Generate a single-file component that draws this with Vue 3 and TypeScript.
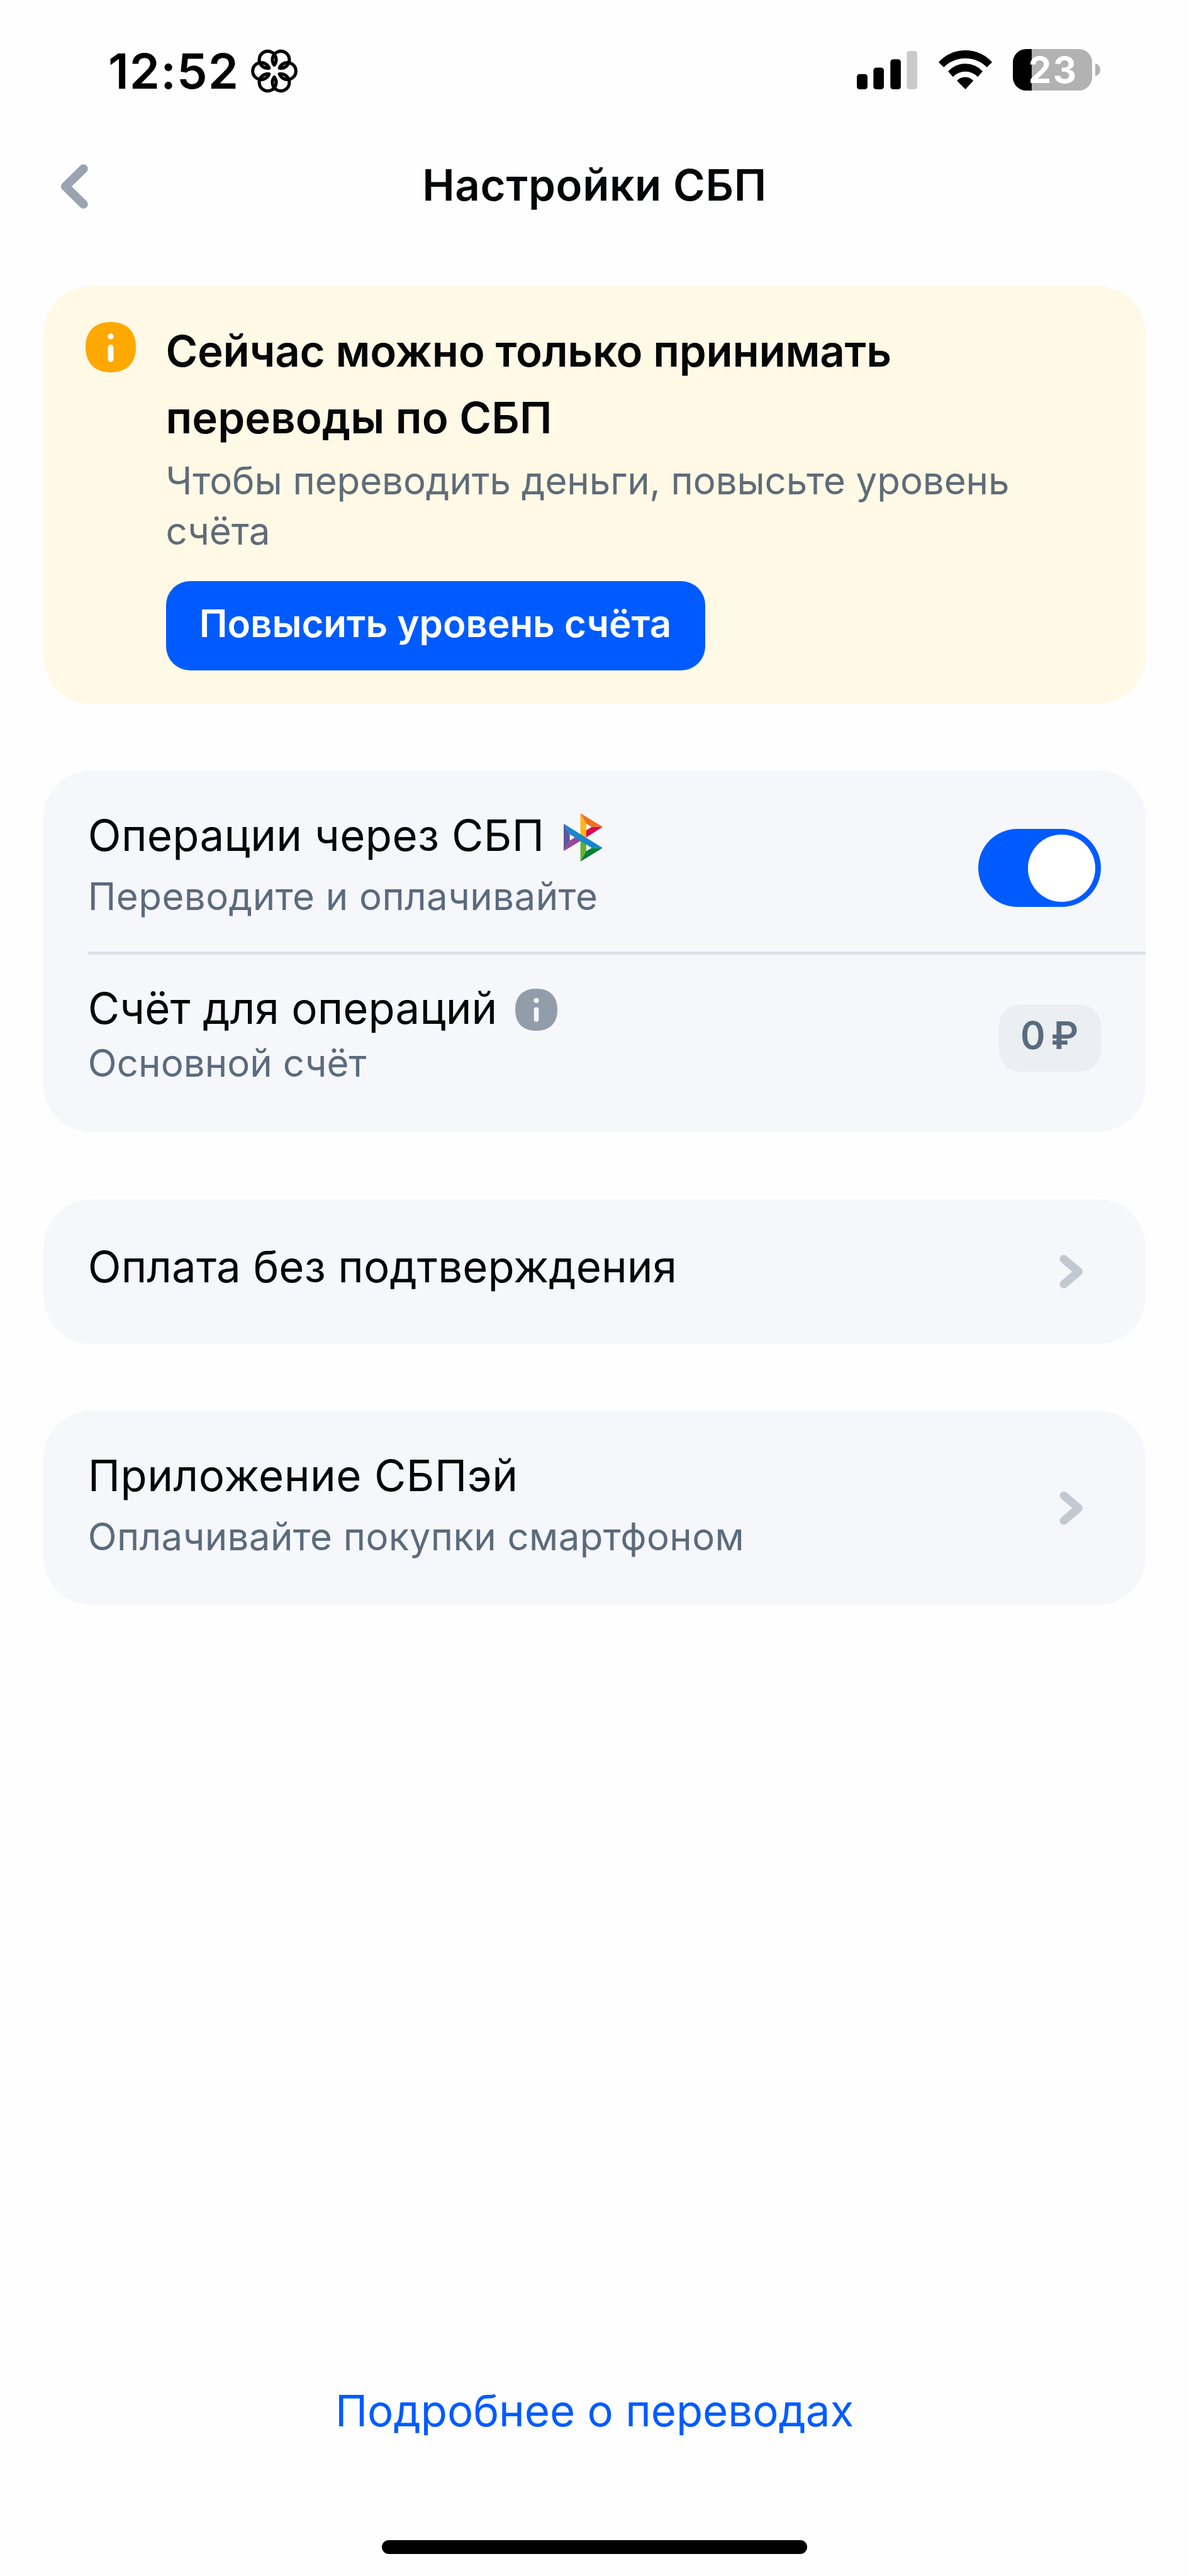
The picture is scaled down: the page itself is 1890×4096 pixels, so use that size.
<script setup lang="ts">
import { ref } from 'vue'

interface LinkCard {
  title: string
  subtitle?: string
  spacing: string
}

const operationsOn = ref(true)

const linkCards: LinkCard[] = [
  { title: 'Оплата без подтверждения', spacing: 'plain' },
  { title: 'Приложение СБПэй', subtitle: 'Оплачивайте покупки смартфоном', spacing: 'wide' },
]

const petalAngles = [0, 60, 120, 180, 240, 300]
</script>

<template>
  <div class="screen">
    <header class="status">
      <div class="status-left">
        <span class="time">12:52</span>
        <svg class="flower" viewBox="-137.5 -137.5 275 275">
          <path
            v-for="angle in petalAngles"
            :key="angle"
            d="M31 18A50 50 0 1 0 31 -18"
            :transform="`rotate(${angle})`"
            fill="none"
            stroke="#000"
            stroke-width="19"
            stroke-linecap="round"
          />
        </svg>
      </div>
      <div class="status-right">
        <svg class="signal" viewBox="98 122 335 227" preserveAspectRatio="none">
          <rect x="98" y="259" width="59" height="90" rx="16" />
          <rect x="190" y="221" width="58" height="128" rx="16" />
          <rect x="284" y="171" width="58" height="178" rx="16" />
          <rect x="375" y="122" width="58" height="227" rx="16" fill="#cacaca" />
        </svg>
        <svg class="wifi" viewBox="550 118 296 231" preserveAspectRatio="none">
          <path d="M550 189A190 190 0 0 1 846 189L817 219A160 160 0 0 0 579 219Z" />
          <path d="M602 243A123 123 0 0 1 794 243L766 275A90 90 0 0 0 630 275Z" />
          <path d="M652 299A56 56 0 0 1 742 299L698 349Z" />
        </svg>
        <div class="battery">
          <div class="battery-body">23</div>
          <svg class="battery-nub" viewBox="0 0 28 75" preserveAspectRatio="none"><path d="M0 0C18 5 28 20 28 37.500S18 70 0 75Z" fill="#b2b2b2" /></svg>
        </div>
      </div>
    </header>

    <nav class="topbar">
      <svg class="back" viewBox="0 0 44 71">
        <path d="M36.700 7.300L8 35.500L36.700 63.700" fill="none" stroke="#99a4b0" stroke-width="14" stroke-linecap="round" stroke-linejoin="round" />
      </svg>
      <h1 class="page-title">Настройки СБП</h1>
    </nav>

    <main class="content">
      <section class="alert">
        <svg class="alert-icon" viewBox="0 0 99 99">
          <path d="M49.500 0C81 0 99 18 99 49.500S81 99 49.500 99S0 81 0 49.500S18 0 49.500 0Z" fill="#ffa800" />
          <circle cx="49.500" cy="28.500" r="5.800" fill="#fff" />
          <rect x="44" y="44.500" width="11" height="34" rx="5.500" fill="#fff" />
        </svg>
        <div class="alert-body">
          <h2 class="alert-title"><span class="line-a">Сейчас можно только принимать</span><br>переводы по СБП</h2>
          <p class="alert-text">Чтобы переводить деньги, повысьте уровень<br>счёта</p>
          <button class="primary">Повысить уровень счёта</button>
        </div>
      </section>

      <section class="card">
        <div class="row row-toggle">
          <div class="texts">
            <div class="title-line">
              <span class="title loose">Операции через СБП</span>
              <svg class="sbp" viewBox="166 88 231 286">
                <path d="M300 150L332 169L300 189ZM202 212L235 231L202 250ZM300 272L332 293L300 312Z" fill="#fff" />
                <path d="M166 150L202 212V250L166 312Z" fill="#5b57a2" />
                <path d="M166 312L202 250L235 230L268 251Z" fill="#984798" />
                <path d="M300 189L332 169H397L300 231Z" fill="#da0751" />
                <path d="M265 88L300 150V235L265 213Z" fill="#fdb813" />
                <path d="M265 88L397 169H332L300 150Z" fill="#ee7026" />
                <path d="M265 249L300 270V312L265 374Z" fill="#63b32e" />
                <path d="M265 374L300 312L332 293H397Z" fill="#068037" />
                <path d="M166 150L397 293H332L202 212Z" fill="#1687cb" />
              </svg>
            </div>
            <div class="subtitle loose">Переводите и оплачивайте</div>
          </div>
          <button class="toggle" :class="{ on: operationsOn }" role="switch" :aria-checked="operationsOn" @click="operationsOn = !operationsOn">
            <span class="knob"></span>
          </button>
        </div>
        <div class="divider"></div>
        <div class="row row-account">
          <div class="texts">
            <div class="title-line">
              <span class="title">Счёт для операций</span>
              <svg class="hint" viewBox="0 0 83 83">
                <path d="M41.500 0C68 0 83 15 83 41.500S68 83 41.500 83S0 68 0 41.500S15 0 41.500 0Z" fill="#929daa" />
                <circle cx="41.500" cy="23.300" r="5" fill="#f6f7fb" />
                <rect x="36.800" y="36.500" width="9.400" height="29" rx="4.700" fill="#f6f7fb" />
              </svg>
            </div>
            <div class="subtitle">Основной счёт</div>
          </div>
          <div class="badge"><span>0</span><span>₽</span></div>
        </div>
      </section>

      <section v-for="card in linkCards" :key="card.title" class="card link-card" :class="card.spacing">
        <div class="texts">
          <div class="title">{{ card.title }}</div>
          <div v-if="card.subtitle" class="subtitle">{{ card.subtitle }}</div>
        </div>
        <svg class="chevron" viewBox="0 0 38 54">
          <path d="M7 7L30.500 27L7 47" fill="none" stroke="#c3c9d1" stroke-width="13" stroke-linecap="round" stroke-linejoin="round" />
        </svg>
      </section>
    </main>

    <footer class="footer">
      <a class="more">Подробнее о переводах</a>
      <div class="home-bar"></div>
    </footer>
  </div>
</template>

<style>
body {
  margin: 0;
  background: #fefefe;
}
</style>

<style scoped>
.screen {
  box-sizing: border-box;
  width: 1890px;
  height: 4096px;
  display: flex;
  flex-direction: column;
  background: #fefefe;
  color: #040506;
  font-family: Inter, "Liberation Sans", sans-serif;
  overflow: hidden;
}

svg {
  display: block;
  flex: none;
}

h1,
h2,
p {
  margin: 0;
}

button {
  border: 0;
  font-family: inherit;
}

.status {
  box-sizing: border-box;
  height: 222px;
  padding: 0 141.500px 0 172px;
  display: flex;
  align-items: center;
  justify-content: space-between;
}

.status-left {
  display: flex;
  align-items: center;
  gap: 19px;
  padding-top: 4px;
}

.time {
  font-size: 77.4px;
  font-weight: 600;
  line-height: 90px;
  letter-spacing: 1.14px;
  color: #000;
}

.flower {
  width: 74px;
  height: 74px;
}

.status-right {
  display: flex;
  align-items: center;
  gap: 33.500px;
}

.signal {
  width: 96px;
  height: 61px;
}

.wifi {
  width: 85px;
  height: 62px;
}

.battery {
  display: flex;
  align-items: center;
  gap: 5px;
}

.battery-body {
  box-sizing: border-box;
  width: 125.400px;
  height: 66px;
  padding-left: 3px;
  border-radius: 21px;
  background: linear-gradient(to right, #000 30px, #b2b2b2 30px);
  color: #fff;
  font-size: 58px;
  font-weight: 700;
  line-height: 66px;
  letter-spacing: 2.500px;
  text-align: center;
}

.battery-nub {
  width: 8px;
  height: 20px;
}

.topbar {
  height: 148px;
  padding: 0 96px;
  display: grid;
  grid-template-columns: 44px 1fr 44px;
  align-items: center;
}

.back {
  width: 44px;
  height: 71px;
}

.page-title {
  padding-bottom: 5px;
  font-size: 69px;
  font-weight: 600;
  line-height: 86px;
  letter-spacing: 0.63px;
  text-align: center;
}

.content {
  flex: 1;
  padding: 85px 69.500px 0 68.500px;
  display: flex;
  flex-direction: column;
  gap: 106.400px;
}

.alert {
  box-sizing: border-box;
  height: 664px;
  padding: 50px 67px 0;
  display: flex;
  gap: 48px;
  border-radius: 76px;
  background: #fff9e6;
}

.alert-icon {
  width: 80px;
  height: 80px;
  margin-top: 7px;
}

.alert-title {
  font-size: 69px;
  font-weight: 600;
  line-height: 106.200px;
  letter-spacing: 0.09px;
}

.line-a {
  letter-spacing: -0.28px;
}

.alert-text {
  margin-top: 7.700px;
  font-size: 60px;
  line-height: 79.500px;
  letter-spacing: -0.08px;
  color: #5f6c78;
}

.primary {
  display: block;
  box-sizing: border-box;
  width: 857px;
  height: 142px;
  margin-top: 39.500px;
  padding: 0 0 8px;
  border-radius: 38px;
  background: #005bff;
  color: #fff;
  font-size: 60px;
  font-weight: 600;
  line-height: 80px;
  letter-spacing: 0;
  text-align: center;
}

.card {
  border-radius: 76px;
  background: #f6f7fb;
}

.row {
  box-sizing: border-box;
  padding: 0 70.600px 0 71.300px;
  display: flex;
  justify-content: space-between;
  align-items: flex-start;
}

.row-toggle {
  height: 288px;
  padding-top: 57.700px;
}

.row-account {
  height: 282px;
  padding-top: 40px;
}

.title-line {
  display: flex;
  align-items: center;
}

.title {
  font-size: 69px;
  line-height: 90px;
  letter-spacing: 0.08px;
}

.title.loose {
  letter-spacing: 0.32px;
}

.subtitle {
  margin-top: 13.500px;
  font-size: 60px;
  line-height: 76px;
  letter-spacing: 0.08px;
  color: #5b6b7e;
}

.subtitle.loose {
  letter-spacing: 0.44px;
}

.row-account .subtitle {
  margin-top: 4.300px;
}

.sbp {
  width: 62px;
  height: 77px;
  margin: 6px 0 0 31px;
}

.hint {
  width: 67px;
  height: 67px;
  margin: 5px 0 0 28px;
}

.toggle {
  box-sizing: border-box;
  width: 195px;
  height: 124px;
  margin-top: 35.200px;
  padding: 8.500px;
  display: flex;
  border-radius: 62px;
  background: #c3c9d1;
}

.toggle.on {
  justify-content: flex-end;
  background: #005bff;
}

.knob {
  width: 107px;
  height: 107px;
  border-radius: 50%;
  background: #fff;
}

.divider {
  height: 4.800px;
  margin-left: 71.300px;
  background: #dbe0e9;
}

.badge {
  box-sizing: border-box;
  width: 162px;
  height: 107px;
  margin-top: 38.800px;
  padding: 0 0 8px 34px;
  display: flex;
  align-items: center;
  gap: 9px;
  border-radius: 34px;
  background: #ebeef2;
  color: #5b6b7e;
  font-size: 60px;
  font-weight: 600;
}

.link-card {
  box-sizing: border-box;
  padding: 0 99px 0 71.300px;
  display: flex;
  justify-content: space-between;
  align-items: center;
}

.link-card.plain {
  height: 230.300px;
}

.link-card.plain .texts {
  padding-bottom: 15.500px;
}

.link-card.wide {
  height: 308.800px;
}

.link-card.wide .texts {
  padding-bottom: 13.500px;
}

.link-card.wide .title {
  letter-spacing: 0.5px;
}

.link-card.wide .subtitle {
  letter-spacing: 0.38px;
}

.chevron {
  width: 38px;
  height: 54px;
}

.footer {
  display: flex;
  flex-direction: column;
  align-items: center;
  padding-bottom: 35px;
}

.more {
  font-size: 69px;
  line-height: 90px;
  letter-spacing: -0.05px;
  color: #005bff;
}

.home-bar {
  width: 676px;
  height: 22px;
  margin-top: 161.500px;
  border-radius: 11px;
  background: #000;
}
</style>
